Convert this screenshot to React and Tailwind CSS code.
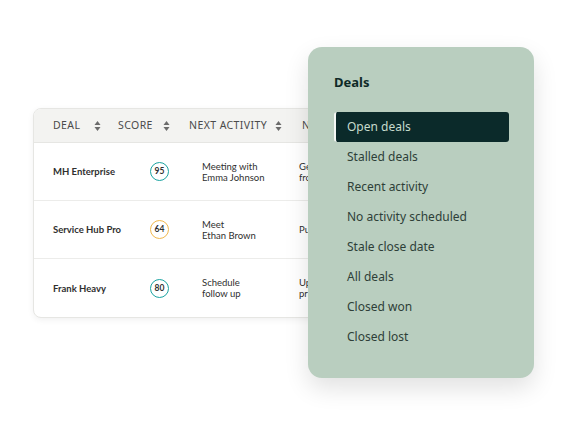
import { Fragment } from "react";

const deals = [
  { name: "MH Enterprise", score: 95, ring: "border-[#1aa3a1]", activity: ["Meeting with", "Emma Johnson"], next: ["Get", "from"] },
  { name: "Service Hub Pro", score: 64, ring: "border-[#f0b84e]", activity: ["Meet", "Ethan Brown"], next: ["Push"] },
  { name: "Frank Heavy", score: 80, ring: "border-[#1aa3a1]", activity: ["Schedule", "follow up"], next: ["Update", "price"] },
];

const views = [
  "Open deals",
  "Stalled deals",
  "Recent activity",
  "No activity scheduled",
  "Stale close date",
  "All deals",
  "Closed won",
  "Closed lost",
];

function SortIcon() {
  return (
    <svg width="7" height="12" viewBox="0 0 7 12" className="shrink-0">
      <path d="M3.5 1 L6.5 5 H0.5 Z" fill="#6b6b6b" />
      <path d="M3.5 11 L6.5 7 H0.5 Z" fill="#6b6b6b" />
    </svg>
  );
}

export default function App() {
  return (
    <div
      className="relative w-[567px] h-[425px] bg-white overflow-hidden"
      style={{ fontFamily: '"Noto Sans", "Open Sans", sans-serif' }}
    >
      {/* Deals table, runs on under the panel */}
      <div className="ml-[33px] mt-[108px] w-[300px] rounded-lg border border-[#e6e6e3] bg-white shadow-[0_2px_6px_rgba(0,0,0,0.06)] overflow-hidden">
        <div className="flex items-center h-[34px] bg-[#f3f3f1] border-b border-[#e6e6e3] text-[10.5px] tracking-[0.04em] text-[#4b4b4b] whitespace-nowrap">
          <div className="flex items-center shrink-0 pl-[19px] w-[84px]">
            <span className="w-[41px]">DEAL</span>
            <SortIcon />
          </div>
          <div className="flex items-center shrink-0 w-[71px]">
            <span className="w-[45px]">SCORE</span>
            <SortIcon />
          </div>
          <div className="flex items-center shrink-0 w-[113px]">
            <span className="w-[86px]">NEXT ACTIVITY</span>
            <SortIcon />
          </div>
          <span className="shrink-0">NEXT</span>
        </div>

        {deals.map((d, i) => (
          <div
            key={d.name}
            className={`flex items-center h-[58px] text-[9.5px] leading-[11px] text-[#2f2f2f] whitespace-nowrap ${
              i < deals.length - 1 ? "border-b border-[#ececea]" : ""
            }`}
            style={{ fontFamily: 'Lato, "Noto Sans", sans-serif' }}
          >
            <div className="shrink-0 pl-[19px] w-[116px] font-bold">{d.name}</div>
            <div className="shrink-0 w-[52px]">
              <div className={`w-[19px] h-[19px] rounded-full border-[1.5px] ${d.ring} flex items-center justify-center text-[8.5px] font-bold`}>
                {d.score}
              </div>
            </div>
            <div className="shrink-0 w-[97px]">
              {d.activity.map((l) => (
                <div key={l}>{l}</div>
              ))}
            </div>
            <div className="shrink-0">
              {d.next.map((l) => (
                <div key={l}>{l}</div>
              ))}
            </div>
          </div>
        ))}
      </div>

      {/* Saved views panel */}
      <div className="absolute left-[308px] top-[47px] w-[226px] h-[331px] rounded-[14px] bg-[#b9cebf] shadow-[0_10px_24px_rgba(0,0,0,0.12)] pt-[26px] pl-[26px] pr-[25px]">
        <h2 className="text-[13px] leading-[18px] font-bold text-[#0f2a27]">Deals</h2>
        <ul className="mt-[21px]">
          {views.map((v, i) => (
            <Fragment key={v}>
              {i === 0 ? (
                <li className="h-[30px] flex items-center pl-[11px] rounded-[3px] bg-[#0b2a2a] border-l-2 border-[#f4f8f5] text-[12px] text-[#c6dbcd]">
                  {v}
                </li>
              ) : (
                <li className="h-[30px] flex items-center pl-[13px] text-[12px] text-[#2e3f38]">{v}</li>
              )}
            </Fragment>
          ))}
        </ul>
      </div>
    </div>
  );
}
